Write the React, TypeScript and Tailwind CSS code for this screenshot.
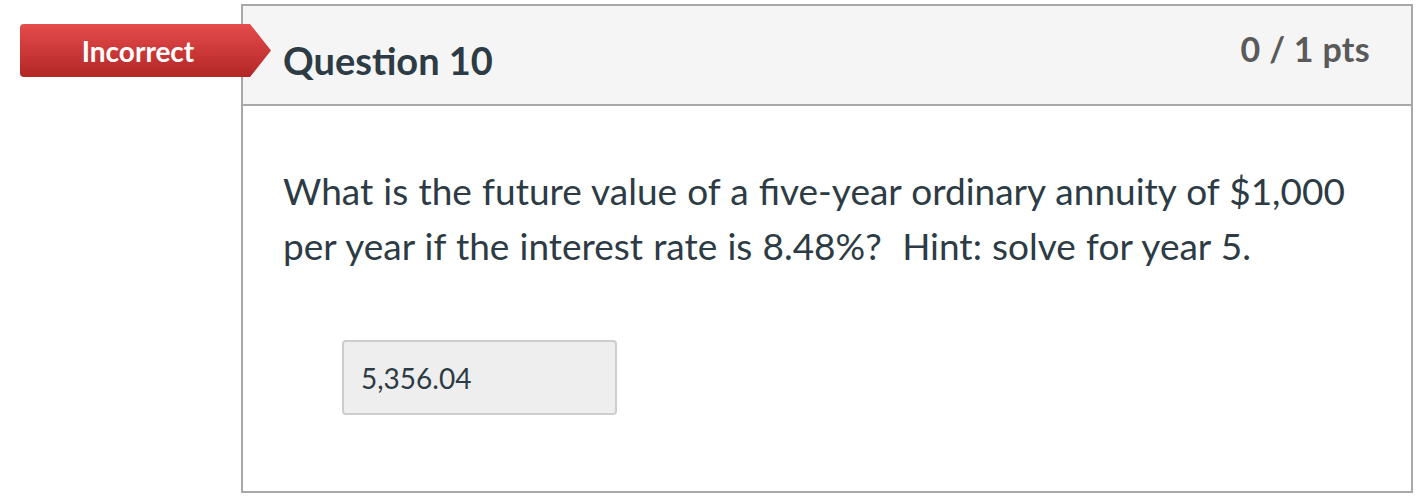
export default function App() {
  return (
    <div className="relative h-[502px] w-full overflow-hidden bg-white font-['Lato','Noto_Sans',sans-serif] text-[#2d3b45]">
      {/* 결과 배지 (카드 테두리 위에 겹침) */}
      <div className="absolute left-[20px] top-[24px] flex h-[53px]">
        <div className="flex w-[230px] items-center justify-center rounded-l-[4px] bg-gradient-to-b from-[#e54b4b] to-[#b32626] pl-[6px]">
          <span className="text-[28px] font-bold text-white">Incorrect</span>
        </div>
        <div className="w-[21px] bg-gradient-to-b from-[#e54b4b] to-[#b32626] [clip-path:polygon(0_0,100%_50%,0_100%)]" />
      </div>

      <div className="ml-[241px] mt-[4px] flex h-[489px] w-[1172px] flex-col border-2 border-[#a8a8a8]">
        <div className="flex h-[100px] shrink-0 items-start justify-between border-b-2 border-[#a8a8a8] bg-[#f5f5f5] pl-[40px] pr-[41px]">
          <h2 className="pt-[34px] text-[38px] font-bold leading-[40px]">Question 10</h2>
          <div className="pt-[23px] text-[34px] font-bold leading-[40px] tracking-[0.3px] text-[#5a5a5a]">0 / 1 pts</div>
        </div>

        <div className="flex flex-col pl-[40px] pt-[57px]">
          <p className="text-[37px] leading-[55px] [word-spacing:0.7px]">
            What is the future value of a five-year ordinary annuity of $1,000
            <br />
            per year if the interest rate is 8.48%?&nbsp; Hint: solve for year 5.
          </p>
          <div className="ml-[59px] mt-[67px] flex h-[75px] w-[275px] items-center rounded-[4px] border-2 border-[#cdcdcd] bg-[#eeeeee] px-[17px]">
            <span className="text-[28px]">5,356.04</span>
          </div>
        </div>
      </div>
    </div>
  );
}
